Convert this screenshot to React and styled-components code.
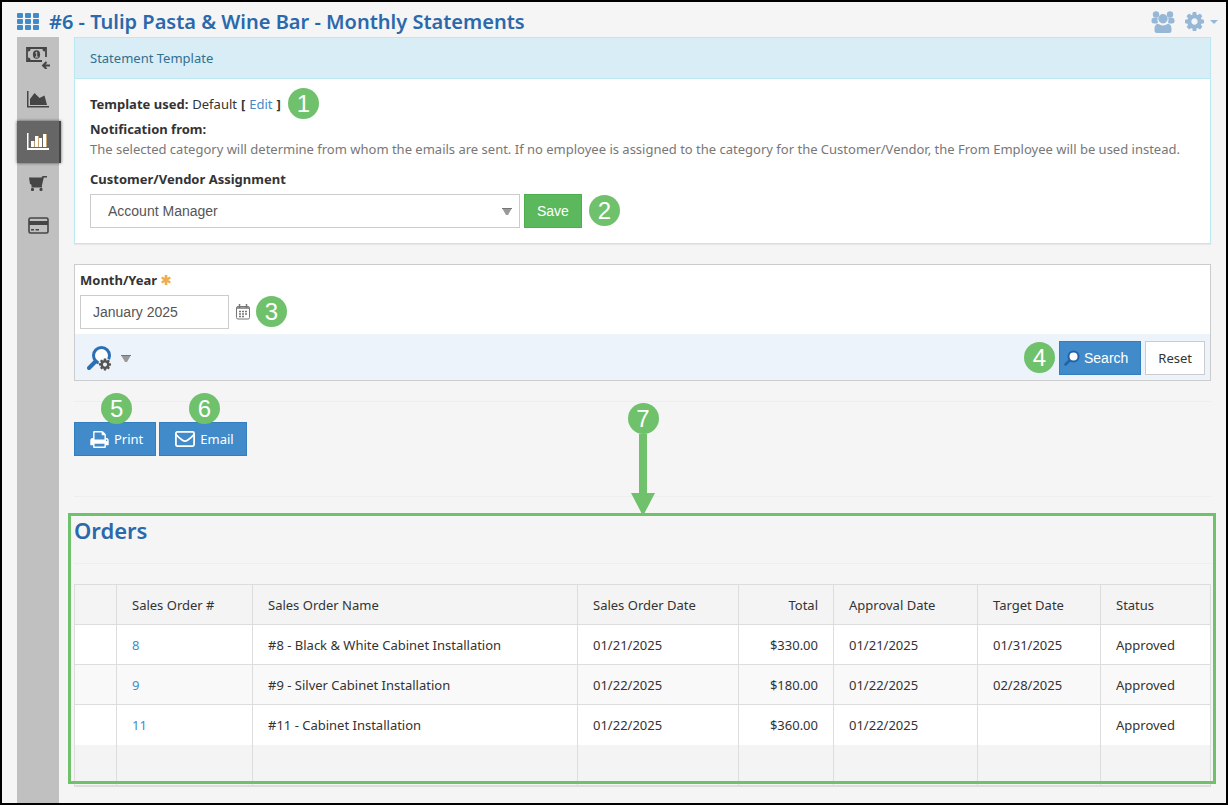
import React, { useState } from 'react';
import styled, { createGlobalStyle, css } from 'styled-components';

const GlobalStyle = createGlobalStyle`
  * {
    box-sizing: border-box;
  }

  body {
    margin: 0;
    background-color: #f5f5f5;
    color: #333;
    font-family: "Noto Sans", sans-serif;
    font-size: 13px;
    line-height: 20px;
  }
`;

// Styled Components
const Frame = styled.div`
  display: flex;
  flex-direction: column;
  min-height: 100vh;
  border: 2px solid black;
  background-color: #f5f5f5;
`;

const TopBar = styled.header`
  display: flex;
  align-items: center;
  gap: 10px;
  height: 35px;
  padding: 4px 8px 0 15px;
`;

const PageTitle = styled.h1`
  flex: 1;
  margin: 0;
  color: #2a69ac;
  font-size: 20px;
  font-weight: 600;
  line-height: 30px;
`;

const TopButton = styled.button`
  display: flex;
  align-items: center;
  gap: 6px;
  padding: 0;
  border: none;
  background: none;
  color: #97b7d6;
  cursor: pointer;
`;

const Body = styled.div`
  display: flex;
  flex: 1;
  gap: 15px;
  padding: 0 15px;
`;

const Sidebar = styled.nav`
  flex: none;
  width: 42px;
  background-color: #c0c0c0;
`;

const SidebarLink = styled.a`
  display: flex;
  align-items: center;
  justify-content: center;
  width: 42px;
  height: 42px;
  color: #454545;

  ${({ $active }) => $active && css`
    width: 44px;
    border-right: 2px solid #444;
    background-color: #666;
    box-shadow: 0 0 3px rgba(0, 0, 0, 0.6);
    color: white;
  `}
`;

const Content = styled.main`
  flex: 1;
  min-width: 0;
`;

const TemplatePanel = styled.section`
  border: 1px solid #bce8f1;
  background-color: white;
  box-shadow: 0 1px 1px rgba(0, 0, 0, 0.05);
`;

const PanelHeading = styled.h2`
  margin: 0;
  padding: 10px 15px;
  border-bottom: 1px solid #bce8f1;
  background-color: #d9edf7;
  color: #31708f;
  font-size: 13px;
  font-weight: 400;
  line-height: 20px;
`;

const PanelBody = styled.div`
  padding: 15px;
`;

const TemplateRow = styled.div`
  display: flex;
  align-items: center;
  gap: 4px;
  height: 20px;
  margin-bottom: 5px;
`;

const SectionTitle = styled.div`
  font-weight: 700;
`;

const HelpText = styled.p`
  margin: 0 0 10px;
  color: #777;
`;

const FieldLabel = styled.label`
  display: flex;
  align-items: center;
  gap: 4px;
  margin-bottom: 5px;
  font-weight: 700;
`;

const Link = styled.a`
  color: #428bca;
  text-decoration: none;

  &:hover {
    text-decoration: underline;
  }
`;

const ControlRow = styled.div`
  display: flex;
  align-items: center;
  gap: 4px;
`;

const SelectWrapper = styled.div`
  display: flex;
  align-items: center;
  position: relative;
  width: 430px;

  svg {
    position: absolute;
    right: 8px;
    pointer-events: none;
  }
`;

const fieldStyle = css`
  height: 34px;
  border: 1px solid #ccc;
  border-radius: 0;
  background-color: white;
  color: #555;
  font-family: "Liberation Sans", sans-serif;
  font-size: 14px;
`;

const Select = styled.select`
  ${fieldStyle}
  width: 100%;
  padding: 0 17px;
  appearance: none;
`;

const TextInput = styled.input`
  ${fieldStyle}
  width: 149px;
  padding: 0 12px;
`;

const buttonColors = {
  success: css`
    border-color: #4cae4c;
    background-color: #5cb85c;
    color: white;
  `,
  primary: css`
    border-color: #357ebd;
    background-color: #428bca;
    color: white;
  `,
  plain: css`
    border-color: #ccc;
    background-color: white;
    color: #333;
  `,
};

const Button = styled.button`
  display: flex;
  align-items: center;
  gap: 6px;
  height: 34px;
  padding: 0 12px;
  border: 1px solid;
  font-family: ${({ $arial }) => ($arial ? '"Liberation Sans"' : '"Noto Sans"')}, sans-serif;
  font-size: ${({ $arial }) => ($arial ? 14 : 13)}px;
  cursor: pointer;
  ${({ $color }) => buttonColors[$color]}
`;

const SearchButton = styled(Button)`
  gap: 4px;
  padding: 0 12px 0 4px;
`;

const ActionButton = styled(Button)`
  gap: 5px;
  padding: 0 12px 0 15px;
`;

const SearchPanel = styled.section`
  margin-top: 20px;
  border: 1px solid #ccc;
  background-color: white;
`;

const SearchFields = styled.div`
  padding: 5px;
`;

const SearchFooter = styled.div`
  display: flex;
  align-items: center;
  justify-content: space-between;
  padding: 7px 5px 5px 12px;
  background-color: #ecf3fb;
`;

const IconButton = styled.button`
  display: flex;
  align-items: center;
  gap: 9px;
  padding: 0;
  border: none;
  background: none;
  cursor: pointer;
`;

const CalendarButton = styled(IconButton)`
  margin: 0 2px 0 3px;
`;

const Divider = styled.hr`
  height: 1px;
  margin: 20px 0;
  border: none;
  background-color: #eee;
`;

const Actions = styled.div`
  display: flex;
  gap: 3px;
  margin-bottom: 40px;
`;

const ActionSlot = styled.div`
  position: relative;
`;

const Badge = styled.span`
  display: flex;
  align-items: center;
  justify-content: center;
  width: 31px;
  height: 31px;
  margin-bottom: 2px;
  border-radius: 50%;
  background-color: #70c16b;
  color: white;
  font-family: "Liberation Sans", sans-serif;
  font-size: 24px;
  font-weight: 400;
  line-height: 31px;
`;

const InlineBadge = styled(Badge)`
  margin: 0 3px 2px;
`;

const TopBadge = styled(Badge)`
  position: absolute;
  top: -29px;
  left: calc(50% - 14px);
`;

const OrdersSection = styled.section`
  position: relative;
`;

const OrdersTitle = styled.h2`
  margin: 0;
  color: #2a69ac;
  font-size: 22px;
  font-weight: 600;
  line-height: 26px;
`;

const OrdersOutline = styled.div`
  position: absolute;
  top: -4px;
  right: -5px;
  bottom: 3px;
  left: -6px;
  border: 3px solid #70c16b;
  pointer-events: none;
`;

const OrdersPointer = styled.div`
  display: flex;
  flex-direction: column;
  align-items: center;
  position: absolute;
  bottom: calc(100% + 1px);
  left: calc(50% - 15px);
`;

const PointerBadge = styled(Badge)`
  margin: 0;
`;

const OrdersTable = styled.table`
  width: 100%;
  border: 1px solid #ddd;
  border-bottom-width: 2px;
  border-collapse: collapse;
  table-layout: fixed;
`;

const Column = styled.col`
  width: ${({ $width }) => $width};
`;

const HeaderCell = styled.th`
  height: 40px;
  padding: 0 15px;
  border: 1px solid #ddd;
  background-color: #f4f4f4;
  font-weight: 400;
  text-align: ${({ $align }) => $align || 'left'};
`;

const Row = styled.tr`
  background-color: ${({ $striped }) => ($striped ? '#f9f9f9' : 'white')};
`;

const Cell = styled.td`
  height: 40px;
  padding: 0 15px;
  border: 1px solid #ddd;
  border-bottom-width: ${({ $last }) => ($last ? 0 : 1)}px;
  text-align: ${({ $align }) => $align || 'left'};
`;

const FooterCell = styled.td`
  height: 41px;
  border: 1px solid #ddd;
  border-top: none;
  border-bottom-width: 2px;
  background-color: #f4f4f4;
`;

// Icons
const GEAR_PATH = 'M1024 768q0-106-75-181t-181-75-181 75-75 181 75 181 181 75 181-75 75-181zm512-109v222q0 12-8 23t-20 13l-185 28q-19 54-39 91 35 50 107 138 10 12 10 25t-9 23q-27 37-99 108t-94 71q-12 0-26-9l-138-108q-44 23-91 38-16 136-29 186-7 28-36 28h-222q-14 0-24.500-8.500t-11.500-21.500l-28-184q-49-16-90-37l-141 107q-10 9-25 9-14 0-25-11-126-114-165-168-7-10-7-23 0-12 8-23 15-21 51-66.500t54-70.500q-27-50-41-99l-183-27q-13-2-21-12.500t-8-23.500v-222q0-12 8-23t19-13l186-28q14-46 39-92-40-57-107-138-10-12-10-24 0-10 9-23 26-36 98.500-107.500t94.500-71.500q13 0 26 10l138 107q44-23 91-38 16-136 29-186 7-28 36-28h222q14 0 24.500 8.500t11.500 21.500l28 184q49 16 90 37l142-107q9-9 24-9 13 0 25 10 129 119 165 170 7 8 7 22 0 12-8 23-15 21-51 66.500t-54 70.500q26 50 41 98l183 28q13 2 21 12.500t8 23.500z';

const PRINT_PATH = 'M384 1536h896v-256h-896v256zm0-640h896v-384h-160q-40 0-68-28t-28-68v-160h-640v640zm1152 64q0-26-19-45t-45-19-45 19-19 45 19 45 45 19 45-19 19-45zm128 0v416q0 13-9.500 22.500t-22.500 9.500h-224v160q0 40-28 68t-68 28h-960q-40 0-68-28t-28-68v-160h-224q-13 0-22.500-9.500t-9.500-22.500v-416q0-79 56.500-135.500t135.500-56.500h64v-544q0-40 28-68t68-28h672q40 0 88 20t76 48l152 152q28 28 48 76t20 88v256h64q79 0 135.500 56.500t56.500 135.500z';

const GridIcon = () => (
  <svg width="22" height="18" viewBox="0 0 22 18" fill="#428bca">
    {[0, 8, 16].map((x) => [0, 6, 12].map((y) => (
      <rect key={`${x}-${y}`} x={x} y={y} width="6" height="5" rx="1" />
    )))}
  </svg>
);

const PeopleIcon = () => (
  <svg width="24" height="22" viewBox="0 0 24 22" fill="currentColor">
    <circle cx="5" cy="3.500" r="3.200" />
    <circle cx="19" cy="3.500" r="3.200" />
    <path d="M2.500 6.800h4.300Q6 9 7 11.500L6 12.500H3Q.5 12.500.5 10.500V9Q.5 7 2.500 6.800zM21.500 6.800h-4.300q.8 2.200-.2 4.700l1 1h3q2.500 0 2.500-2V9q0-2-2-2.200z" />
    <circle cx="12" cy="7.700" r="4.700" />
    <path d="M6.500 12.800q1 0 2 .7 3.500 1.800 7 0 1-.7 2-.7 3 1 3 5.200v1.500q0 2.500-2.500 2.500H6q-2.500 0-2.500-2.500V18q0-4.200 3-5.200z" />
  </svg>
);

const GearIcon = ({ size, color = 'currentColor' }) => (
  <svg width={size} height={size} viewBox="0 0 1536 1536" fill={color}>
    <path d={GEAR_PATH} />
  </svg>
);

const CaretIcon = () => (
  <svg width="8" height="4" viewBox="0 0 8 4" fill="currentColor">
    <path d="M0 0h8L4 4z" />
  </svg>
);

const ArrowIcon = () => (
  <svg width="10" height="7" viewBox="0 0 10 7">
    <path d="M0 0h10L6 7H4z" fill="#999" />
    <path d="M0 0h10v1H0z" fill="#777" />
  </svg>
);

const MoneyIcon = () => (
  <svg width="24" height="22" viewBox="0 0 24 22" fill="none" stroke="currentColor">
    <path d="M16 14H1V1h19v9" strokeWidth="1.800" />
    <ellipse cx="10.500" cy="7.500" rx="3.600" ry="4.300" fill="currentColor" stroke="none" />
    <path d="M9.300 6l1.400-1v4.800M9 10h3.300" stroke="#c0c0c0" />
    <path d="M2 4.500Q4.500 4.500 4.500 2H2zM16.500 2q0 2.500 2.500 2.500V2zM2 10.500q2.500 0 2.500 2.500H2z" fill="currentColor" stroke="none" />
    <path d="M24 18.500h-6M20.500 15L17 18.500l3.500 3.500" strokeWidth="2" />
  </svg>
);

const AreaChartIcon = () => (
  <svg width="22" height="18" viewBox="0 0 22 18" fill="currentColor">
    <path d="M0 0h1.500v15H22v1.500H0z" />
    <path d="M3 14V8l4.500-6 5 5L17.500 4.500 20 14z" />
  </svg>
);

const BarChartIcon = () => (
  <svg width="22" height="18" viewBox="0 0 22 18" fill="currentColor">
    <path d="M0 0h1.500v15H22v2H0z" />
    <path d="M4 8h3v6H4zM8 3h3v11H8zM12 5h3v9h-3zM16 1h3v13h-3z" />
    <path d="M11 3h.7v11H11zM19 1h.7v13H19zM7 8h.6v6H7z" fill="#f0c27a" />
  </svg>
);

const CartIcon = () => (
  <svg width="18" height="16" viewBox="0 0 18 16" fill="currentColor">
    <path d="M0 1.500h12.500L13.700 0H18v1.500h-3.200L12.800 10H2.500V8.800L1 8z" />
    <path d="M2.500 10v1.500H13V10z" />
    <rect x="2" y="12" width="3" height="3" rx="1" />
    <rect x="10.500" y="12" width="3" height="3" rx="1" />
  </svg>
);

const CardIcon = () => (
  <svg width="21" height="18" viewBox="0 0 21 18" fill="currentColor">
    <rect x="1" y="1" width="19" height="15" rx="1.500" fill="none" stroke="currentColor" strokeWidth="1.600" />
    <path d="M1 4h19v4H1zM3 12h3v1.500H3zM7.500 12H11v1.500H7.500z" />
  </svg>
);

const CalendarIcon = () => (
  <svg width="14" height="16" viewBox="0 0 14 16" fill="none" stroke="#777">
    <rect x="0.500" y="2.500" width="13" height="12.500" rx="1.500" />
    <path d="M1 4h12" strokeWidth="1.500" />
    <path d="M3.500 0v4M10.500 0v4" strokeWidth="1.500" />
    <path d="M3 7.500h8M3 10h8M3 12.500h6" strokeWidth="1.500" strokeDasharray="2 1" />
  </svg>
);

const AsteriskIcon = () => (
  <svg width="10" height="10" viewBox="0 0 10 10" stroke="#f0ad4e" strokeWidth="2.600">
    <path d="M5 0v10M.7 2.500l8.600 5M.7 7.500l8.600-5" />
  </svg>
);

const SearchSettingsIcon = () => (
  <svg width="25" height="25" viewBox="0 0 25 25" fill="none">
    <circle cx="14.500" cy="9.500" r="8" fill="white" stroke="#2d6fb3" strokeWidth="3" />
    <path d="M8.500 15.500L2 22" stroke="#2d6fb3" strokeWidth="4" strokeLinecap="round" />
    <circle cx="18" cy="18.500" r="6.600" fill="#ecf3fb" />
    <g transform="translate(12 12.500) scale(0.0078)">
      <path d={GEAR_PATH} fill="#555" />
    </g>
  </svg>
);

const SearchIcon = () => (
  <svg width="16" height="16" viewBox="0 0 16 16">
    <path d="M6 10l-4.500 4.500" stroke="#2163a8" strokeWidth="2.500" strokeLinecap="round" />
    <circle cx="9.500" cy="6.500" r="5" fill="white" stroke="#2163a8" strokeWidth="2" />
  </svg>
);

const PrintIcon = () => (
  <svg width="19" height="17" viewBox="0 128 1664 1536" fill="currentColor">
    <path d={PRINT_PATH} />
  </svg>
);

const EnvelopeIcon = () => (
  <svg width="20" height="16" viewBox="0 0 20 16" fill="none" stroke="currentColor" strokeWidth="1.800">
    <rect x="0.900" y="0.900" width="18.200" height="14.200" rx="1.500" />
    <path d="M1 3.500Q3 6 7.500 9.200q2.500 1.800 5 0Q17 6 19 3.500" />
  </svg>
);

const PointerArrow = () => (
  <svg width="24" height="82" viewBox="0 0 24 82" fill="#70c16b">
    <path d="M8 0h8v59h8L12 82 0 59h8z" />
  </svg>
);

const sidebarItems = [
  { name: 'Payments', icon: <MoneyIcon /> },
  { name: 'Reports', icon: <AreaChartIcon /> },
  { name: 'Statements', icon: <BarChartIcon />, active: true },
  { name: 'Purchases', icon: <CartIcon /> },
  { name: 'Cards', icon: <CardIcon /> },
];

const columns = [
  { label: '', width: '42px' },
  { label: 'Sales Order #', width: '136px' },
  { label: 'Sales Order Name', width: 'auto' },
  { label: 'Sales Order Date', width: '161px' },
  { label: 'Total', width: '95px', align: 'right' },
  { label: 'Approval Date', width: '144px' },
  { label: 'Target Date', width: '123px' },
  { label: 'Status', width: '110px' },
];

const orders = [
  { id: 8, name: '#8 - Black & White Cabinet Installation', date: '01/21/2025', total: '$330.00', approval: '01/21/2025', target: '01/31/2025', status: 'Approved' },
  { id: 9, name: '#9 - Silver Cabinet Installation', date: '01/22/2025', total: '$180.00', approval: '01/22/2025', target: '02/28/2025', status: 'Approved' },
  { id: 11, name: '#11 - Cabinet Installation', date: '01/22/2025', total: '$360.00', approval: '01/22/2025', target: '', status: 'Approved' },
];

function App() {
  const [assignment, setAssignment] = useState('Account Manager');
  const [month, setMonth] = useState('January 2025');

  return (
    <Frame>
      <GlobalStyle />
      <TopBar>
        <GridIcon />
        <PageTitle>#6 - Tulip Pasta &amp; Wine Bar - Monthly Statements</PageTitle>
        <TopButton aria-label="Contacts"><PeopleIcon /></TopButton>
        <TopButton aria-label="Settings">
          <GearIcon size={19} />
          <CaretIcon />
        </TopButton>
      </TopBar>

      <Body>
        <Sidebar>
          {sidebarItems.map((item) => (
            <SidebarLink key={item.name} href="#" aria-label={item.name} $active={item.active}>
              {item.icon}
            </SidebarLink>
          ))}
        </Sidebar>

        <Content>
          {/* Statement Template */}
          <TemplatePanel>
            <PanelHeading>Statement Template</PanelHeading>
            <PanelBody>
              <TemplateRow>
                <b>Template used:</b> Default <b>[</b> <Link href="#">Edit</Link> <b>]</b>
                <InlineBadge>1</InlineBadge>
              </TemplateRow>
              <SectionTitle>Notification from:</SectionTitle>
              <HelpText>
                The selected category will determine from whom the emails are sent. If no employee is assigned to the category for the Customer/Vendor, the From Employee will be used instead.
              </HelpText>
              <FieldLabel htmlFor="assignment">Customer/Vendor Assignment</FieldLabel>
              <ControlRow>
                <SelectWrapper>
                  <Select id="assignment" value={assignment} onChange={(e) => setAssignment(e.target.value)}>
                    <option>Account Manager</option>
                    <option>Sales Representative</option>
                  </Select>
                  <ArrowIcon />
                </SelectWrapper>
                <Button $color="success" $arial>Save</Button>
                <InlineBadge>2</InlineBadge>
              </ControlRow>
            </PanelBody>
          </TemplatePanel>

          {/* Search */}
          <SearchPanel>
            <SearchFields>
              <FieldLabel htmlFor="month">Month/Year <AsteriskIcon /></FieldLabel>
              <ControlRow>
                <TextInput id="month" type="text" value={month} onChange={(e) => setMonth(e.target.value)} />
                <CalendarButton aria-label="Pick a month"><CalendarIcon /></CalendarButton>
                <Badge>3</Badge>
              </ControlRow>
            </SearchFields>
            <SearchFooter>
              <IconButton aria-label="Search options">
                <SearchSettingsIcon />
                <ArrowIcon />
              </IconButton>
              <ControlRow>
                <Badge>4</Badge>
                <SearchButton $color="primary" $arial><SearchIcon />Search</SearchButton>
                <Button $color="plain">Reset</Button>
              </ControlRow>
            </SearchFooter>
          </SearchPanel>

          <Divider />
          <Actions>
            <ActionSlot>
              <ActionButton $color="primary"><PrintIcon />Print</ActionButton>
              <TopBadge>5</TopBadge>
            </ActionSlot>
            <ActionSlot>
              <ActionButton $color="primary"><EnvelopeIcon />Email</ActionButton>
              <TopBadge>6</TopBadge>
            </ActionSlot>
          </Actions>
          <Divider />

          {/* Orders */}
          <OrdersSection>
            <OrdersTitle>Orders</OrdersTitle>
            <Divider />
            <OrdersTable>
              <colgroup>
                {columns.map((column) => (
                  <Column key={column.label} $width={column.width} />
                ))}
              </colgroup>
              <thead>
                <tr>
                  {columns.map((column) => (
                    <HeaderCell key={column.label} $align={column.align}>{column.label}</HeaderCell>
                  ))}
                </tr>
              </thead>
              <tbody>
                {orders.map((order, index) => {
                  const last = index === orders.length - 1;
                  return (
                    <Row key={order.id} $striped={index % 2 === 1}>
                      <Cell $last={last} />
                      <Cell $last={last}><Link href="#">{order.id}</Link></Cell>
                      <Cell $last={last}>{order.name}</Cell>
                      <Cell $last={last}>{order.date}</Cell>
                      <Cell $last={last} $align="right">{order.total}</Cell>
                      <Cell $last={last}>{order.approval}</Cell>
                      <Cell $last={last}>{order.target}</Cell>
                      <Cell $last={last}>{order.status}</Cell>
                    </Row>
                  );
                })}
              </tbody>
              <tfoot>
                <tr>
                  {columns.map((column) => (
                    <FooterCell key={column.label} />
                  ))}
                </tr>
              </tfoot>
            </OrdersTable>
            <OrdersOutline />
            <OrdersPointer>
              <PointerBadge>7</PointerBadge>
              <PointerArrow />
            </OrdersPointer>
          </OrdersSection>
        </Content>
      </Body>
    </Frame>
  );
}

export default App;
